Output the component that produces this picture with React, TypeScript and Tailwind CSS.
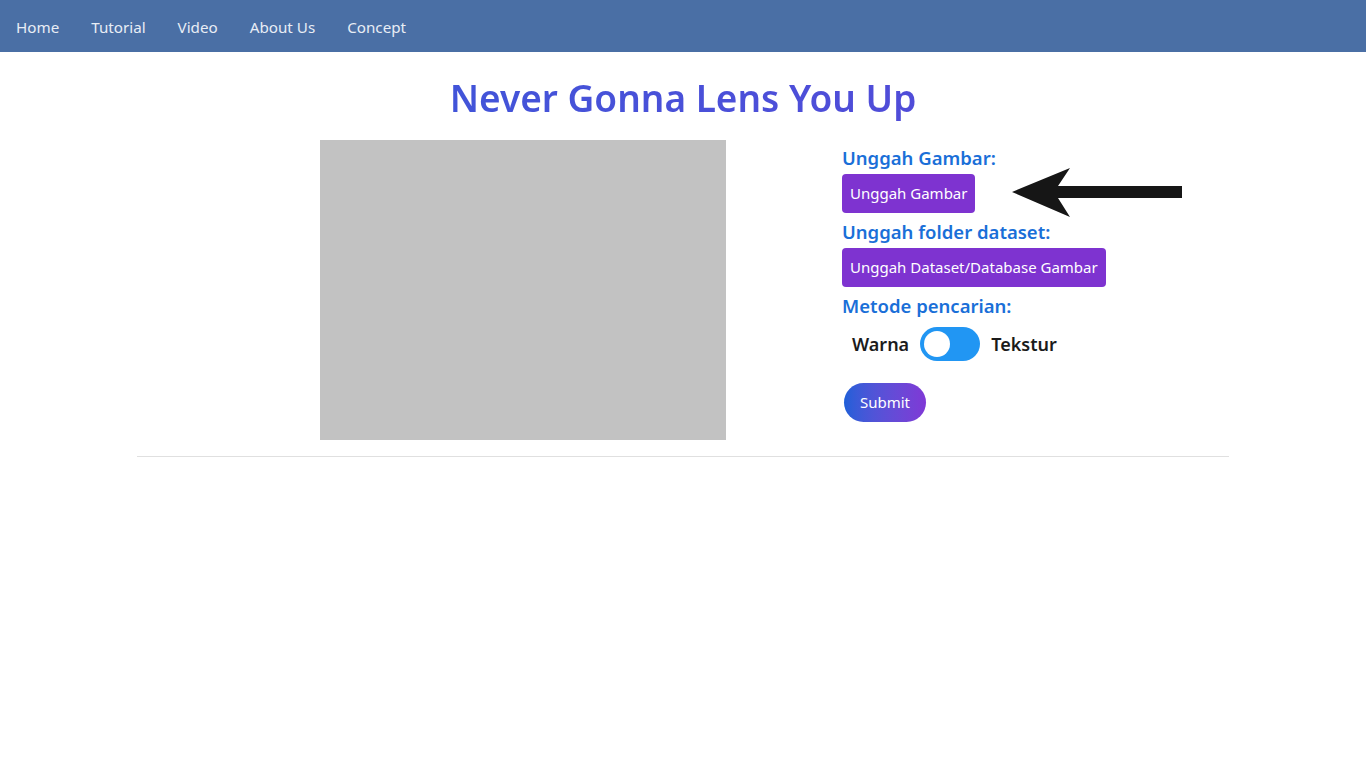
import React, { useState } from "react";

const navItems = ["Home", "Tutorial", "Video", "About Us", "Concept"];

function Arrow() {
  return (
    <svg width="172" height="52" viewBox="0 0 172 52" className="absolute left-[170px] top-[27px]">
      <polygon points="0,25 58,1 46,19 170,19 170,31 46,31 58,50" fill="#161616" />
    </svg>
  );
}

export default function App() {
  const [tekstur, setTekstur] = useState(false);

  return (
    <div className="min-h-screen bg-white font-['Noto_Sans',sans-serif]">
      <nav className="flex h-[52px] items-center bg-[#4a6fa5] pt-[1px]">
        {navItems.map((item) => (
          <a key={item} href="#" className="px-4 text-[15.2px] leading-[24px] text-[#e8edf5]">
            {item}
          </a>
        ))}
      </nav>

      <h1 className="mt-[20px] bg-linear-to-r from-[#2f5bd9] to-[#5b44d8] bg-clip-text text-center text-[37px] font-semibold leading-[52px] text-transparent">
        Never Gonna Lens You Up
      </h1>

      <div className="mx-auto w-[1092px]">
        <div className="flex pl-[183px] pt-[16px]">
          <div className="h-[300px] w-[406px] bg-[#c2c2c2]"></div>

          <div className="relative ml-[116px] flex flex-col items-start pt-[5px]">
            <label className="text-[18.5px] font-semibold leading-[26px] text-[#1a6fd8]">Unggah Gambar:</label>
            <button className="mt-[3px] h-[39px] rounded-[4px] bg-[#7e33d0] px-2 text-[15px] text-white">
              Unggah Gambar
            </button>
            <Arrow />
            <label className="mt-[6px] text-[18.5px] font-semibold leading-[26px] text-[#1a6fd8]">Unggah folder dataset:</label>
            <button className="mt-[3px] h-[39px] rounded-[4px] bg-[#7e33d0] px-2 text-[15px] text-white">
              Unggah Dataset/Database Gambar
            </button>
            <label className="mt-[6px] text-[18.5px] font-semibold leading-[26px] text-[#1a6fd8]">Metode pencarian:</label>

            <div className="mt-[8px] flex items-center pl-[10px]">
              <span className="text-[18px] font-semibold text-[#1b1b1b]">Warna</span>
              <button
                onClick={() => setTekstur(!tekstur)}
                className="mx-[11px] flex h-[34px] w-[60px] items-center rounded-full bg-[#2196f3] px-[4px]"
              >
                <span className={`h-[26px] w-[26px] rounded-full bg-white ${tekstur ? "ml-auto" : ""}`}></span>
              </button>
              <span className="text-[18px] font-semibold text-[#1b1b1b]">Tekstur</span>
            </div>

            <button className="ml-[2px] mt-[22px] h-[39px] w-[82px] rounded-full bg-linear-to-r from-[#1d5fd8] to-[#7f38d6] text-[15px] text-white">
              Submit
            </button>
          </div>
        </div>

        <hr className="mt-[16px] border-t border-[#e0e0e0]" />
      </div>
    </div>
  );
}
